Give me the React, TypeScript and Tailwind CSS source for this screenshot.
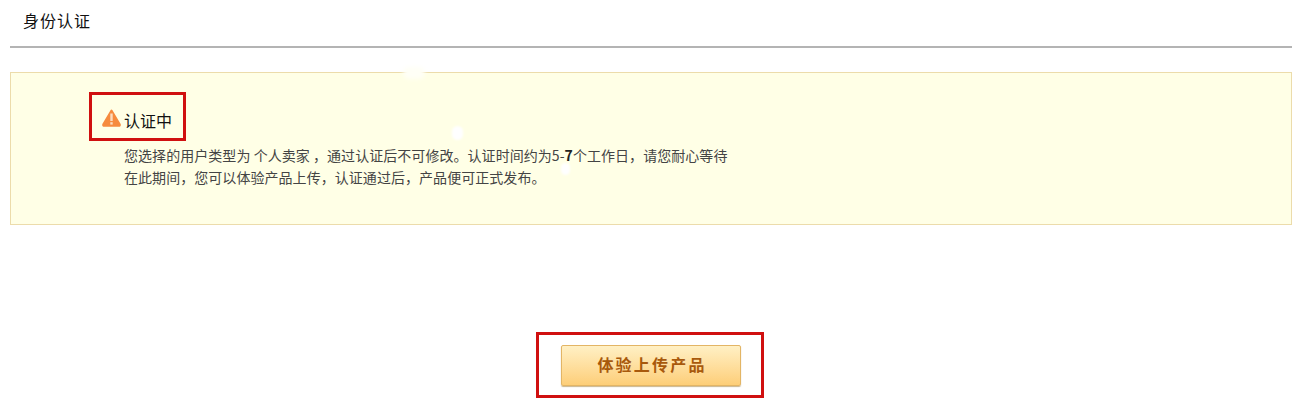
const font = { fontFamily: '"Noto Sans CJK SC", "Liberation Sans", sans-serif' };

function WarningIcon() {
  return (
    <svg width="19" height="18" viewBox="0 0 19 18" className="mb-[2px] ml-[1px] shrink-0">
      <path d="M9.5 1.5 L17.8 15.6 Q18 16.8 16.8 16.8 L2.2 16.8 Q1 16.8 1.2 15.6 Z" fill="#f68b3e" stroke="#f68b3e" strokeWidth="2" strokeLinejoin="round" />
      <rect x="8.3" y="4.5" width="2.4" height="7.5" fill="#fbdcc0" />
      <rect x="8.3" y="13.2" width="2.4" height="2.4" fill="#fbdcc0" />
    </svg>
  );
}

export default function App() {
  return (
    <div className="h-[406px] w-[1306px] overflow-hidden bg-white text-[#222]" style={font}>
      <div className="ml-[10px] w-[1282px]">
        <div className="h-[48px] border-b-2 border-[#b4b4b4] pl-[13px] pt-[8px] text-[16px] leading-[24px] tracking-[1px] text-[#111]">
          身份认证
        </div>

        <div className="relative mt-[24px] h-[153px] border border-[#ecdcab] bg-[#ffffe6] pl-[78px] pt-[19px]">
          {/* little pale smudges on the notice */}
          <span className="absolute left-[392px] top-[-6px] h-[12px] w-[22px] rounded-full bg-[#fffff6] blur-[2px]" />
          <span className="absolute left-[441px] top-[53px] h-[14px] w-[11px] rounded-full bg-white blur-[1px]" />
          <span className="absolute left-[550px] top-[90px] h-[12px] w-[9px] rounded-full bg-white blur-[1px]" />

          <div className="inline-flex h-[49px] w-[97px] items-center gap-[3px] border-[3px] border-[#d01010] pl-[9px] pt-[4px] text-[16px] text-[#111]">
            <WarningIcon />
            <span className="pt-[2px]">认证中</span>
          </div>

          <div className="ml-[35px] mt-[3px] text-[14px] leading-[22px] tracking-[0.05px] text-[#444]">
            <p>
              您选择的用户类型为 个人卖家 ，通过认证后不可修改。认证时间约为5-<b className="text-[#222]">7</b>个工作日，请您耐心等待
            </p>
            <p>在此期间，您可以体验产品上传，认证通过后，产品便可正式发布。</p>
          </div>
        </div>

        <div className="mt-[107px] flex justify-center">
          <div className="mr-[2px] flex h-[66px] w-[228px] items-center justify-center border-[3px] border-[#d01010] pl-[2px]">
            <button className="h-[41px] w-[180px] rounded-[2px] border border-[#e3b565] bg-gradient-to-b from-[#fff0c4] to-[#fdce78] pb-[2px] pl-[2px] text-[16px] font-bold tracking-[2.2px] text-[#a8590c] shadow-[0_1px_1px_rgba(150,110,30,0.5)]">
              体验上传产品
            </button>
          </div>
        </div>
      </div>
    </div>
  );
}
